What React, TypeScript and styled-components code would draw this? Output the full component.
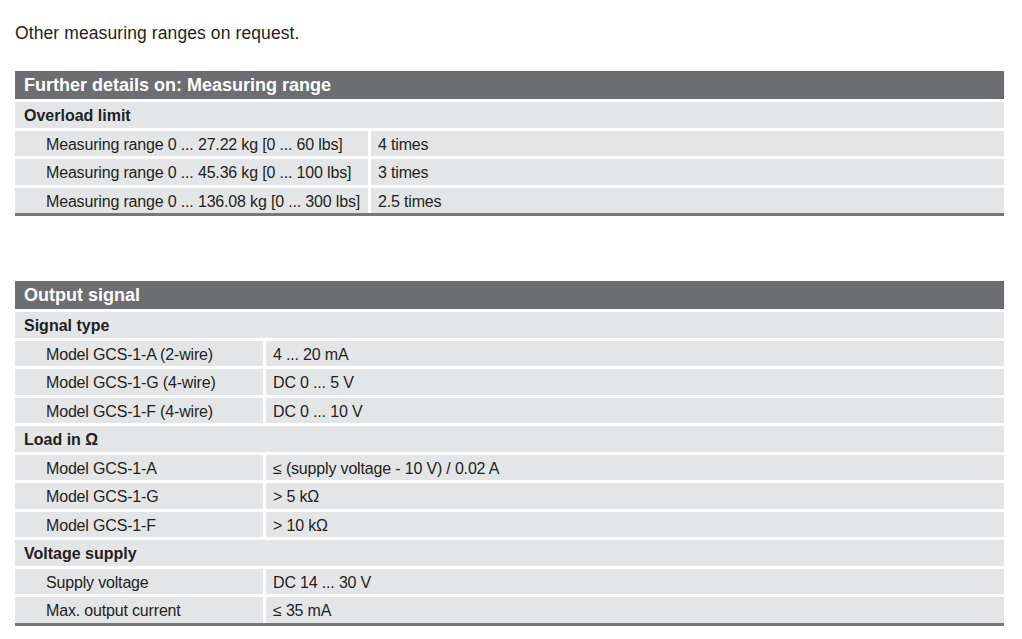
import styled, { createGlobalStyle } from 'styled-components';

type Row = { label: string; value?: string; section?: boolean };

type SpecTable = {
  title: string;
  labelWidth: number;
  rows: Row[];
};

const tables: SpecTable[] = [
  {
    title: 'Further details on: Measuring range',
    labelWidth: 353,
    rows: [
      { label: 'Overload limit', section: true },
      { label: 'Measuring range 0 ... 27.22 kg [0 ... 60 lbs]', value: '4 times' },
      { label: 'Measuring range 0 ... 45.36 kg [0 ... 100 lbs]', value: '3 times' },
      { label: 'Measuring range 0 ... 136.08 kg [0 ... 300 lbs]', value: '2.5 times' },
    ],
  },
  {
    title: 'Output signal',
    labelWidth: 248,
    rows: [
      { label: 'Signal type', section: true },
      { label: 'Model GCS-1-A (2-wire)', value: '4 ... 20 mA' },
      { label: 'Model GCS-1-G (4-wire)', value: 'DC 0 ... 5 V' },
      { label: 'Model GCS-1-F (4-wire)', value: 'DC 0 ... 10 V' },
      { label: 'Load in Ω', section: true },
      { label: 'Model GCS-1-A', value: '≤ (supply voltage - 10 V) / 0.02 A' },
      { label: 'Model GCS-1-G', value: '> 5 kΩ' },
      { label: 'Model GCS-1-F', value: '> 10 kΩ' },
      { label: 'Voltage supply', section: true },
      { label: 'Supply voltage', value: 'DC 14 ... 30 V' },
      { label: 'Max. output current', value: '≤ 35 mA' },
    ],
  },
];

const GlobalStyle = createGlobalStyle`
  body {
    margin: 0;
    background: #ffffff;
    font-family: "Liberation Sans", Arial, sans-serif;
    color: #231f20;
  }
`;

const Page = styled.div`
  width: 1022px;
  height: 639px;
  padding: 22px 18px 0 15px;
  box-sizing: border-box;
  overflow: hidden;
`;

const Note = styled.p`
  margin: 0 0 27px;
  font-size: 17.5px;
  line-height: 22px;
  letter-spacing: 0.1px;
`;

const Table = styled.div<{ $labelWidth: number }>`
  display: grid;
  grid-template-columns: ${(p) => p.$labelWidth}px 1fr;
  grid-template-rows: 28px;
  grid-auto-rows: 25.5px;
  gap: 3px;
  margin-bottom: 65px;
  border-bottom: 3px solid #77787b;
`;

const Header = styled.div`
  grid-column: 1 / -1;
  background: #6d6e71;
  border-right: 1px solid #5f6064;
  color: #ffffff;
  font-weight: bold;
  font-size: 18px;
  line-height: 29px;
  padding-left: 9px;
`;

const Section = styled.div`
  grid-column: 1 / -1;
  background: #e4e5e7;
  font-weight: bold;
  font-size: 16px;
  line-height: 27px;
  padding-left: 9px;
`;

const Cell = styled.div<{ $indent: number }>`
  background: #e4e5e7;
  font-size: 16px;
  line-height: 27px;
  padding-left: ${(p) => p.$indent}px;
  white-space: nowrap;
  letter-spacing: -0.17px;
`;

export default function App() {
  return (
    <Page>
      <GlobalStyle />
      <Note>Other measuring ranges on request.</Note>
      {tables.map((t) => (
        <Table key={t.title} $labelWidth={t.labelWidth}>
          <Header>{t.title}</Header>
          {t.rows.map((r) =>
            r.section ? (
              <Section key={r.label}>{r.label}</Section>
            ) : (
              <>
                <Cell key={r.label} $indent={31}>{r.label}</Cell>
                <Cell key={r.label + '-v'} $indent={7}>{r.value}</Cell>
              </>
            ),
          )}
        </Table>
      ))}
    </Page>
  );
}
